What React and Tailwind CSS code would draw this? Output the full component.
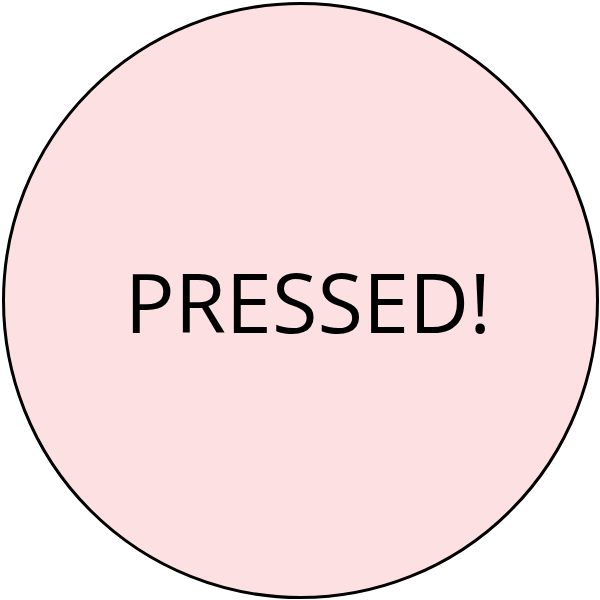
export default function App() {
  return (
    <div className="w-[600px] h-[600px] bg-white flex items-center justify-center">
      <div className="w-[597px] h-[597px] rounded-full border-[3px] border-black bg-[#fde0e2] flex items-center justify-center">
        <span className="text-[83px] leading-none text-black mt-[1px] ml-[16px]" style={{ fontFamily: '"Open Sans", sans-serif' }}>PRESSED!</span>
      </div>
    </div>
  );
}
